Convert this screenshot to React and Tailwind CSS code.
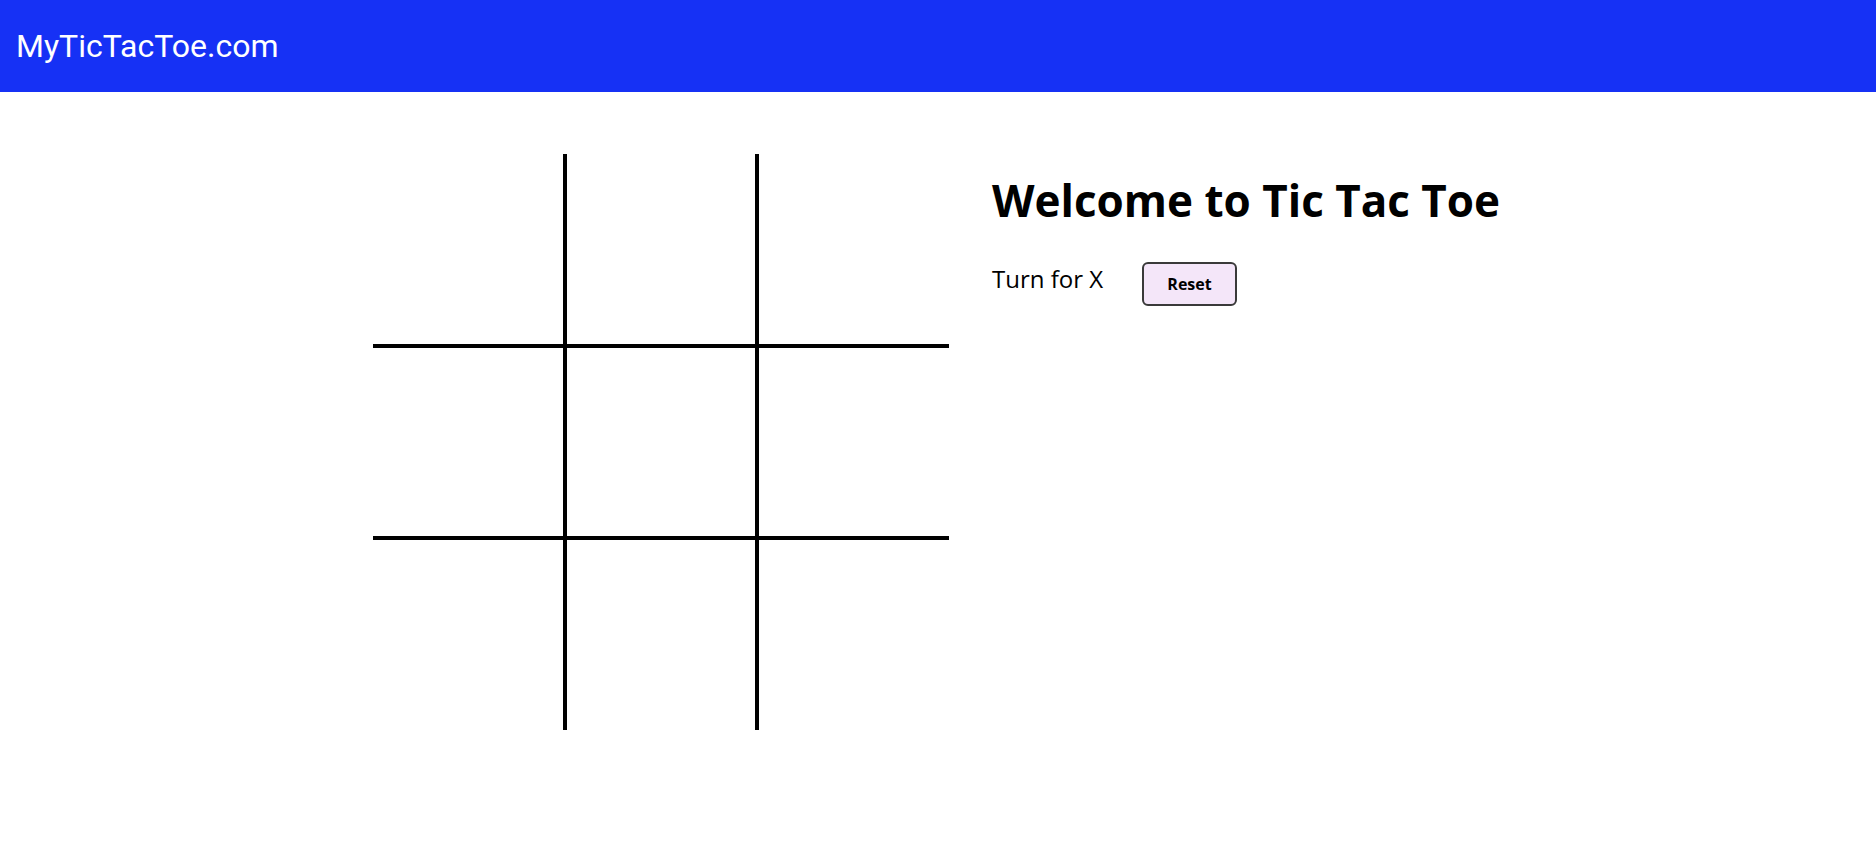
import React, { useState } from "react";

function Square({ value, onClick, index }) {
    const row = Math.floor(index / 3);
    const col = index % 3;
    const borders = [
        col > 0 ? "border-l-2" : "",
        col < 2 ? "border-r-2" : "",
        row > 0 ? "border-t-2" : "",
        row < 2 ? "border-b-2" : "",
    ].join(" ");
    return (
        <button
            onClick={onClick}
            className={`w-[192px] h-[192px] border-black ${borders} flex items-center justify-center text-[96px] font-bold font-['Open_Sans',sans-serif]`}
        >
            {value}
        </button>
    );
}

export default function App() {
    const [squares, setSquares] = useState(Array(9).fill(null));
    const [xNext, setXNext] = useState(true);

    const play = (i) => {
        if (squares[i]) return;
        const next = squares.slice();
        next[i] = xNext ? "X" : "O";
        setSquares(next);
        setXNext(!xNext);
    };

    const reset = () => {
        setSquares(Array(9).fill(null));
        setXNext(true);
    };

    return (
        <div className="min-h-screen bg-white">
            {/* Header */}
            <header className="h-[92px] bg-[#1631f5] flex items-center px-4">
                <span className="text-white text-[32px] font-['Roboto',sans-serif] leading-none">
                    MyTicTacToe.com
                </span>
            </header>

            {/* Main */}
            <main className="flex justify-center gap-[43px] pt-[62px]">
                <div className="grid grid-cols-3 w-[576px]">
                    {squares.map((v, i) => (
                        <Square key={i} index={i} value={v} onClick={() => play(i)} />
                    ))}
                </div>

                <div className="w-[511px] pt-[18px] font-['Open_Sans',sans-serif]">
                    <h1 className="text-[44px] font-bold leading-[56px] text-black whitespace-nowrap">
                        Welcome to Tic Tac Toe
                    </h1>
                    <div className="flex items-center mt-[34px]">
                        <span className="w-[150px] text-[24px] font-normal text-black leading-none -mt-[10px]">
                            Turn for {xNext ? "X" : "O"}
                        </span>
                        <button
                            onClick={reset}
                            className="w-[95px] h-[44px] bg-[#f4e6f9] border-2 border-[#3a3a3a] rounded-[6px] text-[16px] font-bold text-black"
                        >
                            Reset
                        </button>
                    </div>
                </div>
            </main>
        </div>
    );
}
